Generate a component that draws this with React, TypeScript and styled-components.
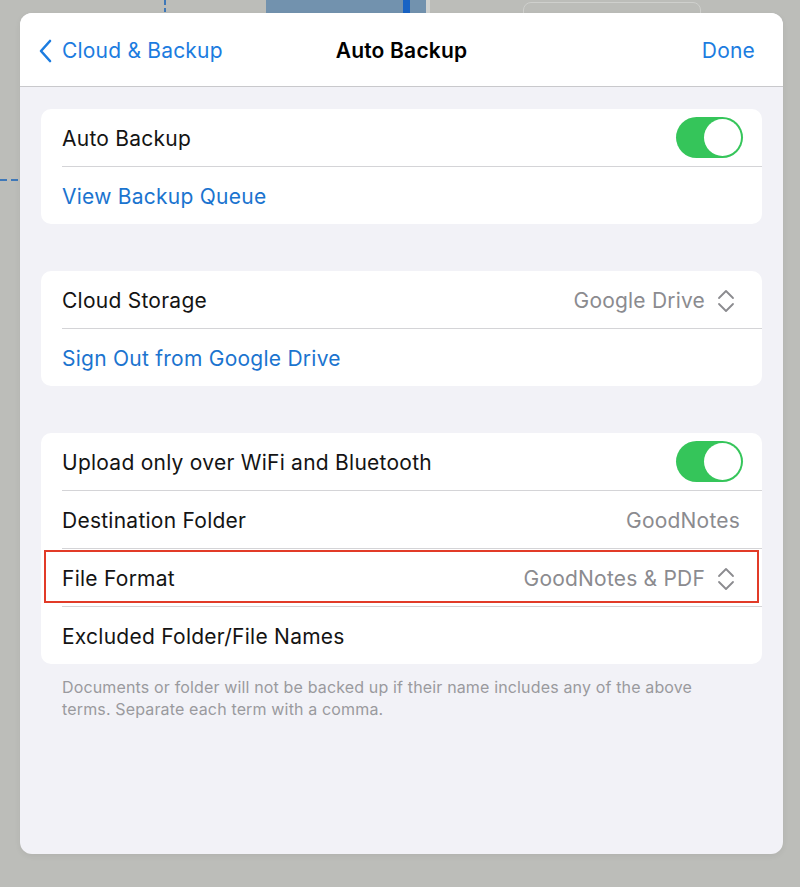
import React from "react";
import styled, { createGlobalStyle } from "styled-components";

const Global = createGlobalStyle`
  html, body { margin: 0; padding: 0; }
  body {
    background: #bcbdb9;
    font-family: Inter, "Noto Sans", sans-serif;
    -webkit-font-smoothing: antialiased;
  }
`;

const Stage = styled.div`
  position: relative;
  width: 800px;
  height: 887px;
  overflow: hidden;
  padding: 13px 0 0 20px;
  box-sizing: border-box;
`;

const Backdrop = styled.div`
  position: absolute;
  inset: 0;
  pointer-events: none;
`;

const DashV = styled.div`
  position: absolute;
  left: 164px;
  top: 0;
  width: 2px;
  height: 12px;
  background: repeating-linear-gradient(to bottom, #3f78b8 0 5px, transparent 5px 8px);
`;

const DashH = styled.div`
  position: absolute;
  left: 0;
  top: 179px;
  width: 20px;
  height: 2px;
  background: repeating-linear-gradient(to right, #3f78b8 0 7px, transparent 7px 11px);
`;

const BluePanel = styled.div`
  position: absolute;
  left: 266px;
  top: 0;
  width: 160px;
  height: 14px;
  background: #7292ae;
  border-right: 4px solid #d0d2d0;
`;

const BlueBar = styled.div`
  position: absolute;
  left: 403px;
  top: 0;
  width: 7px;
  height: 14px;
  background: #1863c4;
`;

const GhostCard = styled.div`
  position: absolute;
  left: 523px;
  top: 2px;
  width: 176px;
  height: 30px;
  border: 1px solid #cfd0cd;
  border-radius: 8px;
`;

const Sheet = styled.div`
  position: relative;
  width: 763px;
  height: 841px;
  border-radius: 12px;
  overflow: hidden;
  background: #f2f2f7;
  display: flex;
  flex-direction: column;
  box-shadow: 0 2px 6px rgba(0, 0, 0, 0.06);
`;

const NavBar = styled.div`
  height: 74px;
  flex: none;
  box-sizing: border-box;
  padding: 2px 28px 0 18px;
  background: #ffffff;
  border-bottom: 1px solid #c9c9cc;
  display: grid;
  grid-template-columns: 1fr auto 1fr;
  align-items: center;
  font-size: 21px;
  letter-spacing: 0.2px;
`;

const BackButton = styled.div`
  display: flex;
  align-items: center;
  gap: 10px;
  color: #1c7ce0;
`;

const Title = styled.div`
  font-weight: 600;
  color: #000;
  padding-left: 10px;
`;

const DoneButton = styled.div`
  justify-self: end;
  color: #1c7ce0;
`;

const Content = styled.div`
  padding: 22px 21px 0;
  display: flex;
  flex-direction: column;
  gap: 47px;
`;

const Section = styled.div`
  display: flex;
  flex-direction: column;
`;

const Group = styled.div`
  background: #ffffff;
  border-radius: 10px;
  overflow: hidden;
`;

const Row = styled.div<{ $last?: boolean; $pr?: number }>`
  position: relative;
  height: 57px;
  box-sizing: border-box;
  padding: 2px ${(p) => p.$pr ?? 21}px 0 21px;
  display: flex;
  align-items: center;
  justify-content: space-between;
  &::after {
    content: "";
    display: ${(p) => (p.$last ? "none" : "block")};
    position: absolute;
    left: 21px;
    right: 0;
    bottom: -1px;
    height: 1px;
    background: #d4d4d7;
  }
  & + & {
    margin-top: 1px;
  }
`;

const Label = styled.span<{ $link?: boolean }>`
  font-size: 21px;
  letter-spacing: 0.25px;
  color: ${(p) => (p.$link ? "#1b74cf" : "#141414")};
`;

const Value = styled.span`
  display: flex;
  align-items: center;
  gap: 12px;
  font-size: 21px;
  letter-spacing: 0.2px;
  color: #8b8b8f;
`;

const Toggle = styled.div`
  width: 67px;
  height: 41px;
  margin-top: -2px;
  border-radius: 21px;
  background: #35c55a;
  display: flex;
  align-items: center;
  justify-content: flex-end;
  padding: 0 2px;
  box-sizing: border-box;
`;

const Knob = styled.div`
  width: 37px;
  height: 37px;
  border-radius: 50%;
  background: #ffffff;
`;

const Highlight = styled.div`
  position: absolute;
  left: 3px;
  right: 3px;
  top: 1px;
  bottom: 3px;
  border: 2px solid #e23b28;
  pointer-events: none;
`;

const Footer = styled.p`
  margin: 12px 0 0;
  padding: 0 21px;
  font-size: 16px;
  line-height: 22px;
  color: #9a9a9e;
  letter-spacing: 0.15px;
`;

const Chevron = () => (
  <svg width="14" height="24" viewBox="0 0 14 24" fill="none">
    <path d="M12 2 L3 12 L12 22" stroke="#1c7ce0" strokeWidth="2.6" strokeLinecap="round" strokeLinejoin="round" />
  </svg>
);

const UpDown = () => (
  <svg width="18" height="24" viewBox="0 0 18 24" fill="none">
    <path d="M2 9 L9 2 L16 9" stroke="#8b8b8f" strokeWidth="1.8" strokeLinecap="round" strokeLinejoin="round" />
    <path d="M2 15 L9 22 L16 15" stroke="#8b8b8f" strokeWidth="1.8" strokeLinecap="round" strokeLinejoin="round" />
  </svg>
);

const Switch = () => (
  <Toggle>
    <Knob />
  </Toggle>
);

export default function App() {
  return (
    <>
      <Global />
      <Stage>
        <Backdrop>
          <DashV />
          <DashH />
          <BluePanel />
          <BlueBar />
          <GhostCard />
        </Backdrop>
        <Sheet>
          <NavBar>
            <BackButton>
              <Chevron />
              <span>Cloud &amp; Backup</span>
            </BackButton>
            <Title>Auto Backup</Title>
            <DoneButton>Done</DoneButton>
          </NavBar>
          <Content>
            <Group>
              <Row $pr={19}>
                <Label>Auto Backup</Label>
                <Switch />
              </Row>
              <Row $last>
                <Label $link>View Backup Queue</Label>
              </Row>
            </Group>
            <Group>
              <Row $pr={27}>
                <Label>Cloud Storage</Label>
                <Value>
                  Google Drive
                  <UpDown />
                </Value>
              </Row>
              <Row $last>
                <Label $link>Sign Out from Google Drive</Label>
              </Row>
            </Group>
            <Section>
              <Group>
                <Row $pr={19}>
                  <Label>Upload only over WiFi and Bluetooth</Label>
                  <Switch />
                </Row>
                <Row $pr={22}>
                  <Label>Destination Folder</Label>
                  <Value>GoodNotes</Value>
                </Row>
                <Row $pr={27}>
                  <Label>File Format</Label>
                  <Value>
                    GoodNotes &amp; PDF
                    <UpDown />
                  </Value>
                  <Highlight />
                </Row>
                <Row $last>
                  <Label>Excluded Folder/File Names</Label>
                </Row>
              </Group>
              <Footer>
                Documents or folder will not be backed up if their name includes any of the above terms. Separate each
                term with a comma.
              </Footer>
            </Section>
          </Content>
        </Sheet>
      </Stage>
    </>
  );
}
